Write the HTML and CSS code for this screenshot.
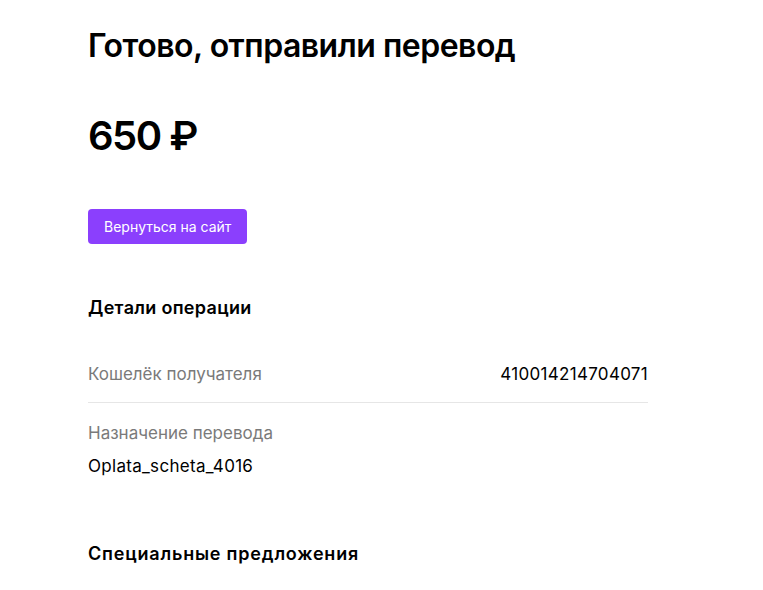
FILE: index.html
```html
<!DOCTYPE html>
<html>

<head>
    <title>Перевод отправлен</title>
    <link rel="stylesheet" href="styles.css">
</head>

<body>
    <div class="page">
        <h1 class="title">Готово, отправили перевод</h1>
        <div class="amount">650 ₽</div>
        <button class="back-button">Вернуться на сайт</button>

        <h2 class="section-title">Детали операции</h2>
        <div class="details">
            <div class="row row-inline">
                <span class="label">Кошелёк получателя</span>
                <span class="value">410014214704071</span>
            </div>
            <div class="row">
                <div class="label">Назначение перевода</div>
                <div class="value">Oplata_scheta_4016</div>
            </div>
        </div>

        <h2 class="section-title offers">Специальные предложения</h2>
    </div>
</body>

</html>
```

FILE: styles.css
```css
body {
    margin: 0;
    background-color: #ffffff;
    color: #000000;
    font-family: 'Inter', 'Noto Sans', sans-serif;
}

.page {
    width: 560px;
    padding: 24px 0 0 88px;
}

.title {
    margin: 0;
    font-size: 32px;
    line-height: 44px;
    font-weight: 600;
    letter-spacing: -0.5px;
}

.amount {
    margin-top: 40px;
    font-size: 40px;
    line-height: 56px;
    font-weight: 600;
    letter-spacing: -1.5px;
}

.back-button {
    display: block;
    margin-top: 45px;
    height: 35px;
    padding: 0 16px;
    border: none;
    border-radius: 4px;
    background-color: #8b3ffd;
    color: white;
    font-family: inherit;
    font-size: 14px;
    cursor: pointer;
}

.section-title {
    margin: 52px 0 0;
    font-size: 18px;
    line-height: 24px;
    font-weight: 600;
    letter-spacing: 0.3px;
}

.details {
    margin-top: 42px;
}

.row {
    font-size: 17px;
    line-height: 24px;
}

.row-inline {
    display: flex;
    justify-content: space-between;
    padding-bottom: 16px;
    border-bottom: 1px solid #e6e6e6;
}

.row + .row {
    padding-top: 18px;
}

.label {
    color: #7a7a7a;
}

.row .value {
    color: #000000;
    letter-spacing: 0.3px;
}

.row:not(.row-inline) .value {
    margin-top: 9px;
}

.offers {
    margin-top: 64px;
    letter-spacing: 0.8px;
}
```
